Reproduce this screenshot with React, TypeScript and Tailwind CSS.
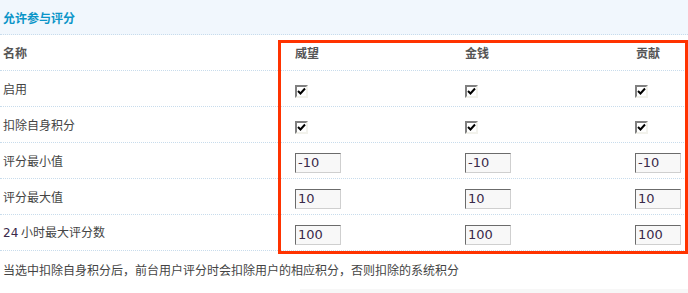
import React from "react";

const cjk = { fontFamily: '"Noto Sans CJK SC", "Noto Sans", sans-serif' };

function Check() {
  return (
    <span className="inline-flex h-[13px] w-[13px] items-center justify-center border-2 border-t-[#808080] border-l-[#808080] border-r-[#f2f2ec] border-b-[#f2f2ec] bg-white">
      <svg width="9" height="9" viewBox="0 0 9 9">
        <path d="M1 4 L3.5 6.5 L8 1.5" stroke="#000" strokeWidth="2" fill="none" />
      </svg>
    </span>
  );
}

function Field({ v }: { v: string }) {
  return (
    <span
      className="inline-flex h-[20px] w-[46px] items-center border border-t-[#6b6b6b] border-l-[#6b6b6b] border-r-[#cfcfcf] border-b-[#cfcfcf] bg-[#f8f8f8] pl-[2px] text-[13px] leading-none text-[#3a2a4a]"
      style={{ fontFamily: '"DejaVu Sans", Verdana, sans-serif' }}
    >
      {v}
    </span>
  );
}

const rowCls =
  "flex h-[36px] items-center border-b border-dotted border-[#c8dcec]";

function Row({
  label,
  cells,
}: {
  label: React.ReactNode;
  cells: React.ReactNode[];
}) {
  return (
    <div className={rowCls}>
      <div className="w-[295px] pl-[3px] text-[12px] text-[#444]">{label}</div>
      <div className="w-[170px]">{cells[0]}</div>
      <div className="w-[170px]">{cells[1]}</div>
      <div className="flex-1">{cells[2]}</div>
    </div>
  );
}

export default function App() {
  return (
    <div className="relative h-[293px] w-[688px] overflow-hidden bg-white" style={cjk}>
      <div className="flex h-[35px] items-center border-b border-dotted border-[#c8dcec] bg-[#f1f7fd] pl-[3px]">
        <span className="pt-[1px] text-[12px] font-bold text-[#0a95c8]">允许参与评分</span>
      </div>
      <div className={rowCls}>
        <div className="w-[295px] pl-[3px] text-[12px] font-bold text-[#555]">名称</div>
        <div className="w-[170px] text-[12px] font-bold text-[#555]">威望</div>
        <div className="w-[170px] text-[12px] font-bold text-[#555]">金钱</div>
        <div className="flex-1 pl-[1px] text-[12px] font-bold text-[#555]">贡献</div>
      </div>
      <Row label="启用" cells={[<Check key="a" />, <Check key="b" />, <Check key="c" />]} />
      <Row label="扣除自身积分" cells={[<Check key="a" />, <Check key="b" />, <Check key="c" />]} />
      <Row label="评分最小值" cells={[<Field key="a" v="-10" />, <Field key="b" v="-10" />, <Field key="c" v="-10" />]} />
      <Row label="评分最大值" cells={[<Field key="a" v="10" />, <Field key="b" v="10" />, <Field key="c" v="10" />]} />
      <Row
        label={
          <>
            <span className="text-[#3a2a4a]" style={{ fontFamily: '"DejaVu Sans", sans-serif', fontSize: "12px" }}>24</span> 小时最大评分数
          </>
        }
        cells={[<Field key="a" v="100" />, <Field key="b" v="100" />, <Field key="c" v="100" />]}
      />
      <div className="pl-[3px] pt-[10px] text-[12px] text-[#444]">
        当选中扣除自身积分后，前台用户评分时会扣除用户的相应积分，否则扣除的系统积分
      </div>
      <div className="absolute bottom-0 left-[300px] right-0 h-[4px] bg-[#f7f7f7]" />
      <div className="pointer-events-none absolute left-[278px] top-[40px] h-[214px] w-[410px] border-[3px] border-[#ff3300]" />
    </div>
  );
}
